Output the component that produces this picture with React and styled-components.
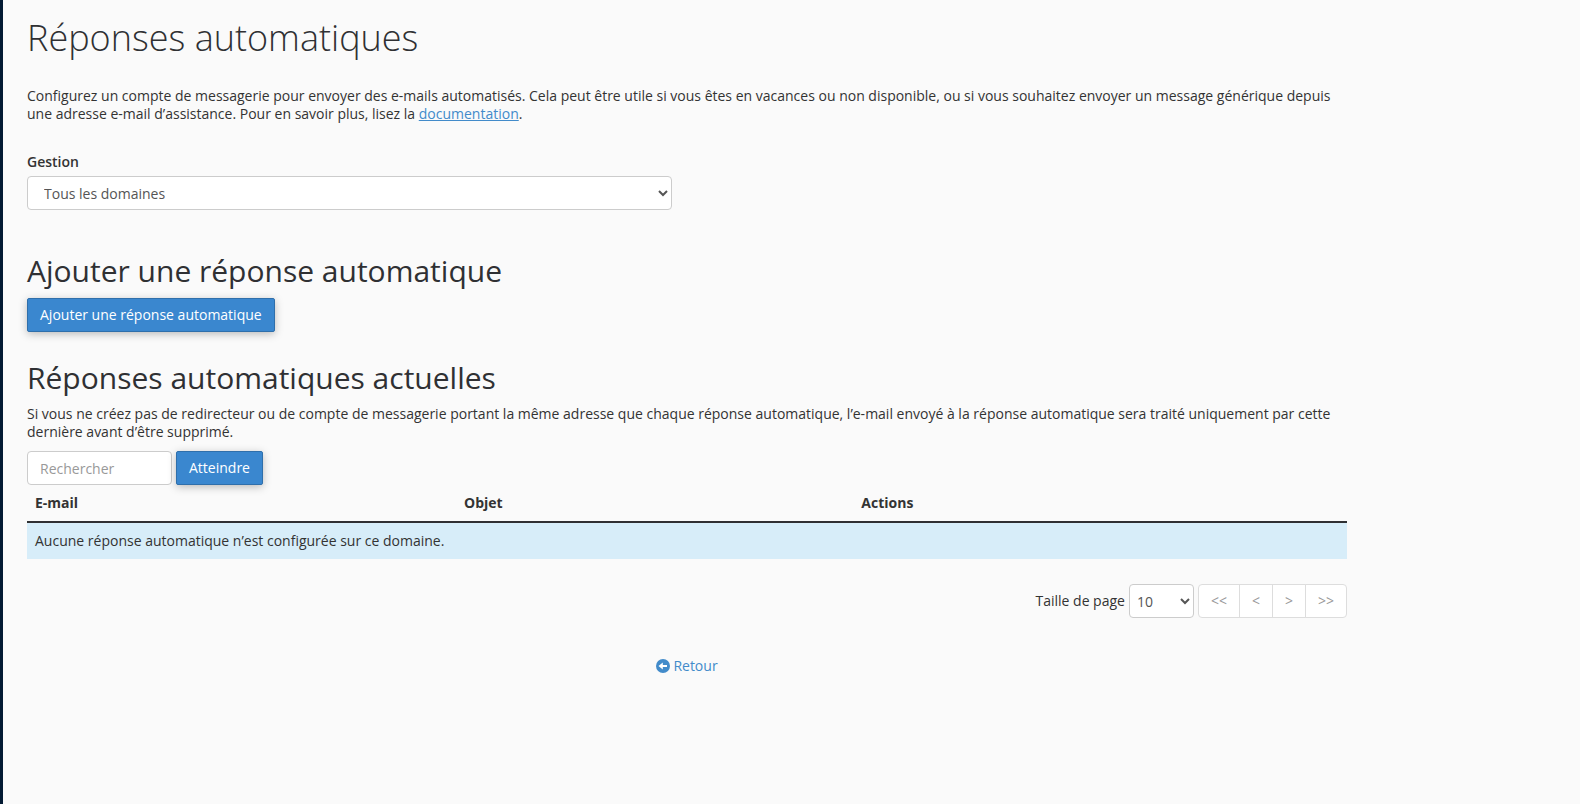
import React from "react";
import styled, { createGlobalStyle, ThemeProvider } from "styled-components";

const theme = {
  text: "#333333",
  heading: "#2f3033",
  link: "#428bca",
  primary: "#3a87cf",
  primaryBorder: "#2f6fab",
  border: "#cccccc",
  info: "#d7edf9",
  background: "#fafafa",
  sidebar: "#031a33",
};

const GlobalStyle = createGlobalStyle`
  * {
    box-sizing: border-box;
  }
  body {
    margin: 0;
    background-color: ${theme.background};
  }
  body, button, input, select {
    font-family: "Open Sans", "Noto Sans", sans-serif;
    font-size: 14px;
    line-height: 18px;
  }
`;

const Page = styled.div`
  min-height: 100vh;
  border-left: 3px solid ${props => props.theme.sidebar};
  padding: 18px 24px;
  color: ${props => props.theme.text};
`;

const Content = styled.main`
  max-width: 1320px;
`;

const Title = styled.h1`
  margin: 0 0 29px;
  color: ${props => props.theme.heading};
  font-size: 36px;
  font-weight: 300;
  line-height: 40px;
`;

const Section = styled.section`
  margin-top: ${props => (props.$spaced ? "41px" : "26px")};
`;

const Subtitle = styled.h2`
  margin: 0 0 7px;
  color: ${props => props.theme.heading};
  font-size: 30px;
  font-weight: 400;
  line-height: 40px;
`;

const Text = styled.p`
  margin: 0 0 10px;
`;

const Link = styled.a`
  color: ${props => props.theme.link};
`;

const Field = styled.div`
  display: flex;
  flex-direction: column;
  width: calc(50% - 15px);
  margin-top: 30px;
`;

const Label = styled.label`
  margin-bottom: 5px;
  font-weight: 600;
`;

const Select = styled.select`
  height: 34px;
  padding: ${props => (props.$small ? "6px 3px" : "6px 12px")};
  width: ${props => (props.$small ? "65px" : "100%")};
  border: 1px solid ${props => props.theme.border};
  border-radius: 4px;
  background-color: #ffffff;
  color: #555555;
`;

const Button = styled.button`
  height: 34px;
  padding: 6px 12px;
  border: 1px solid ${props => props.theme.primaryBorder};
  border-radius: 2px;
  background-color: ${props => props.theme.primary};
  box-shadow: 0 2px 8px rgba(0, 0, 0, 0.26);
  color: #ffffff;
  font-weight: 500;
  cursor: pointer;
`;

const SearchForm = styled.form`
  display: flex;
  gap: 4px;
`;

const SearchInput = styled.input`
  width: 145px;
  height: 34px;
  padding: 6px 12px;
  border: 1px solid ${props => props.theme.border};
  border-radius: 4px;
  background-color: #ffffff;
  &::placeholder {
    color: #999999;
  }
`;

const Table = styled.table`
  width: 100%;
  border-collapse: collapse;
  table-layout: fixed;
`;

const HeadCell = styled.th`
  width: ${props => props.$width};
  padding: 9px 8px;
  border-bottom: 2px solid ${props => props.theme.heading};
  font-weight: 700;
  text-align: left;
`;

const InfoCell = styled.td`
  padding: 9px 8px;
  background-color: ${props => props.theme.info};
`;

const Pager = styled.div`
  display: flex;
  justify-content: flex-end;
  align-items: center;
  gap: 4px;
  margin-top: 25px;
`;

const PageButtons = styled.nav`
  display: flex;
`;

const PageButton = styled.button`
  height: 34px;
  padding: 6px 12px;
  margin-left: -1px;
  border: 1px solid #dddddd;
  background-color: #ffffff;
  color: #999999;
  &:first-child {
    margin-left: 0;
    border-radius: 4px 0 0 4px;
  }
  &:last-child {
    border-radius: 0 4px 4px 0;
  }
`;

const Footer = styled.footer`
  display: flex;
  justify-content: center;
  margin-top: 39px;
`;

const BackLink = styled.a`
  display: flex;
  align-items: center;
  gap: 3px;
  color: ${props => props.theme.link};
  text-decoration: none;
`;

const BackIcon = () => (
  <svg width="14" height="14" viewBox="0 0 14 14" aria-hidden="true">
    <circle cx="7" cy="7" r="7" fill="#428bca" />
    <path d="M2.5 7 L6.8 3.4 V5.9 H11 V8.1 H6.8 V10.6 Z" fill="#ffffff" />
  </svg>
);

const columns = [
  { name: "E-mail", width: "32.5%" },
  { name: "Objet", width: "30.1%" },
  { name: "Actions", width: "37.4%" },
];

const App = () => (
  <ThemeProvider theme={theme}>
    <GlobalStyle />
    <Page>
      <Content>
        <Title>Réponses automatiques</Title>
        <Text>
          Configurez un compte de messagerie pour envoyer des e-mails
          automatisés. Cela peut être utile si vous êtes en vacances ou non
          disponible, ou si vous souhaitez envoyer un message générique depuis
          une adresse e-mail d’assistance. Pour en savoir plus, lisez la{" "}
          <Link href="#documentation">documentation</Link>.
        </Text>
        <Field>
          <Label htmlFor="domain">Gestion</Label>
          <Select id="domain" name="domain">
            <option>Tous les domaines</option>
          </Select>
        </Field>
        <Section $spaced>
          <Subtitle>Ajouter une réponse automatique</Subtitle>
          <Button type="button">Ajouter une réponse automatique</Button>
        </Section>
        <Section>
          <Subtitle>Réponses automatiques actuelles</Subtitle>
          <Text>
            Si vous ne créez pas de redirecteur ou de compte de messagerie
            portant la même adresse que chaque réponse automatique, l’e-mail
            envoyé à la réponse automatique sera traité uniquement par cette
            dernière avant d’être supprimé.
          </Text>
          <SearchForm
            onSubmit={e => {
              e.preventDefault();
            }}
          >
            <SearchInput
              type="text"
              name="search"
              placeholder="Rechercher"
              aria-label="Rechercher"
            />
            <Button type="submit">Atteindre</Button>
          </SearchForm>
          <Table>
            <thead>
              <tr>
                {columns.map(column => (
                  <HeadCell key={column.name} $width={column.width}>
                    {column.name}
                  </HeadCell>
                ))}
              </tr>
            </thead>
            <tbody>
              <tr>
                <InfoCell colSpan={3}>
                  Aucune réponse automatique n’est configurée sur ce domaine.
                </InfoCell>
              </tr>
            </tbody>
          </Table>
          <Pager>
            <label htmlFor="pageSize">Taille de page</label>
            <Select id="pageSize" name="pageSize" $small>
              <option>10</option>
            </Select>
            <PageButtons>
              {["<<", "<", ">", ">>"].map(text => (
                <PageButton key={text} type="button">
                  {text}
                </PageButton>
              ))}
            </PageButtons>
          </Pager>
        </Section>
        <Footer>
          <BackLink href="#retour">
            <BackIcon />
            Retour
          </BackLink>
        </Footer>
      </Content>
    </Page>
  </ThemeProvider>
);

export default App;
